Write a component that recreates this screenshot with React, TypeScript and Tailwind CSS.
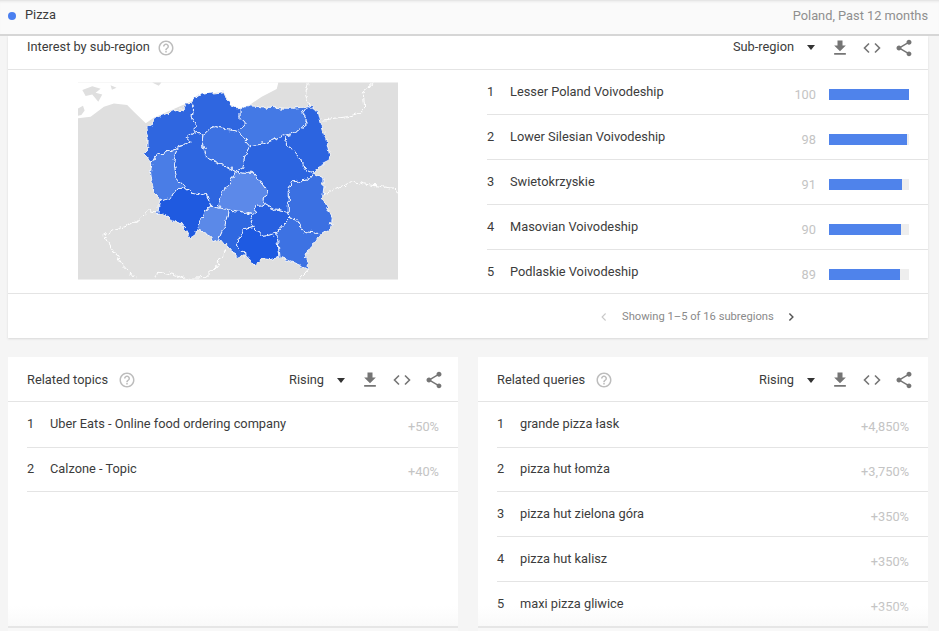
import React from "react";

const regions: [string, string][] = [
  ["#2f66e0", "245,262 218,238 232,222 233,195 226,160 245,150 250,130 290,115 340,100 345,85 360,80 370,100 366,125 375,150 375,170 348,185 362,200 345,210 320,217 290,232 258,240"],
  ["#2f66e0", "360,80 385,62 420,55 460,50 468,70 485,95 510,100 510,130 525,145 505,170 470,163 435,155 415,162 398,178 375,170 375,150 366,125 370,100"],
  ["#4479e5", "510,100 530,92 600,97 660,100 715,95 700,115 712,145 680,170 640,183 580,207 540,212 520,190 505,170 525,145 510,130"],
  ["#2c64e0", "715,95 745,108 755,150 770,200 778,235 775,258 748,272 730,295 705,285 695,255 680,240 655,215 640,183 680,170 712,145 700,115"],
  ["#3d72e3", "398,178 415,162 435,155 470,163 505,170 520,190 540,212 525,240 518,280 495,290 470,275 440,262 410,250 395,205"],
  ["#2e66e0", "375,170 398,178 395,205 410,250 440,262 470,275 495,290 480,320 462,345 445,385 440,398 425,395 410,355 390,360 365,355 345,340 325,320 318,305 310,260 320,217 345,210 362,200 348,185"],
  ["#4a7de6", "245,262 258,240 290,232 320,217 310,260 318,305 325,320 345,340 320,342 300,370 268,375 250,350 245,325 240,290"],
  ["#1f5ae0", "268,375 300,370 320,342 345,340 365,355 390,360 410,355 425,395 415,398 400,420 380,465 375,480 360,490 345,465 330,445 300,435 275,415 262,420"],
  ["#5b89e8", "415,398 425,395 440,398 475,405 465,450 445,495 430,500 420,485 380,465 400,420"],
  ["#2f68e0", "475,405 510,410 550,420 540,435 550,458 520,465 500,510 520,530 522,542 500,552 488,530 470,510 445,495 465,450"],
  ["#1e5ae2", "550,458 575,485 590,483 620,475 625,510 630,548 600,555 575,552 550,570 535,550 522,542 520,530 500,510 520,465"],
  ["#3d72e3", "620,475 640,450 660,430 680,432 700,470 755,478 730,510 705,545 712,565 717,585 690,572 660,560 630,548 625,510"],
  ["#2860e0", "580,385 610,402 655,410 660,430 640,450 620,475 590,483 575,485 550,458 540,435 550,420 560,395"],
  ["#5c89e9", "495,290 520,295 550,295 570,320 590,345 580,385 560,395 550,420 510,410 475,405 440,398 445,385 462,345 480,320"],
  ["#2c64e0", "540,212 580,207 640,183 655,215 680,240 695,255 705,285 730,295 715,315 665,322 655,350 655,410 610,402 580,385 590,345 570,320 550,295 520,295 495,290 518,280 525,240"],
  ["#3b70e2", "730,295 762,310 762,340 757,375 775,405 787,430 783,460 755,478 700,470 680,432 660,430 655,410 655,350 665,322 715,315"],
];

function PolandMap() {
  return (
    <svg viewBox="22 22 963 593" className="block w-[320px] h-[198px]">
      <defs>
        <filter id="wobble" x="-5%" y="-5%" width="110%" height="110%" colorInterpolationFilters="sRGB">
          <feTurbulence type="fractalNoise" baseFrequency="0.06" numOctaves="2" seed="4" />
          <feDisplacementMap in="SourceGraphic" scale="20" xChannelSelector="R" yChannelSelector="G" />
        </filter>
        <clipPath id="mapclip">
          <rect x="22" y="22" width="963" height="593" />
        </clipPath>
      </defs>
      <rect x="22" y="22" width="963" height="593" fill="#dfdfdf" />
      <polygon
        fill="#fff"
        points="22,22 625,22 620,42 575,65 530,95 510,100 480,90 460,50 400,58 360,80 250,128 226,145 190,110 170,90 130,85 100,95 60,125 22,130"
      />
      <path
        fill="#dfdfdf"
        d="M35 45l30-12 25 8-15 12 20 5-12 22-18-22-20 5zM120 30l18 8-14 6zM22 100l15-8 5 14-10 14-10 2zM245 22h28l-8 10z"
      />
      <g clipPath="url(#mapclip)">
        <g fill="none" stroke="#fff" strokeWidth="3" filter="url(#wobble)">
          <path d="M715 22l-8 38 11 35" />
          <path d="M915 22l-35 28 5 50-15 15-40 10-70 10" />
          <path d="M757 360l33-15 60-25 50 10 65 10 20 15" />
          <path d="M262 415l-27-7-35 32-70 25-30 15 25 45 35 50 35 40" />
          <path d="M255 615l10-25 45 10 40 15 50-3 40-37 30-55" />
          <path d="M717 585l-27 30" />
        </g>
      </g>
      <g stroke="#fff" strokeWidth="2.5" strokeLinejoin="round" filter="url(#wobble)">
        {regions.map(([fill, pts], i) => (
          <polygon key={i} points={pts} fill={fill} />
        ))}
      </g>
    </svg>
  );
}

function Mi({ d, className }: { d: string; className: string }) {
  return (
    <svg viewBox="0 0 24 24" className={className} fill="currentColor">
      <path d={d} />
    </svg>
  );
}

const HELP =
  "M11 18h2v-2h-2v2zm1-16C6.48 2 2 6.48 2 12s4.48 10 10 10 10-4.48 10-10S17.52 2 12 2zm0 18c-4.41 0-8-3.59-8-8s3.59-8 8-8 8 3.59 8 8-3.59 8-8 8zm0-14c-2.21 0-4 1.79-4 4h2c0-1.1.9-2 2-2s2 .9 2 2c0 2-3 1.75-3 5h2c0-2.25 3-2.5 3-5 0-2.21-1.79-4-4-4z";
const DOWNLOAD = "M19 9h-4V3H9v6H5l7 7 7-7zM5 18v2h14v-2H5z";
const SHARE =
  "M18 16.08c-.76 0-1.44.3-1.96.77L8.91 12.7c.05-.23.09-.46.09-.7s-.04-.47-.09-.7l7.05-4.11c.54.5 1.25.81 2.04.81 1.66 0 3-1.34 3-3s-1.34-3-3-3-3 1.34-3 3c0 .24.04.47.09.7L8.04 9.81C7.5 9.31 6.79 9 6 9c-1.66 0-3 1.34-3 3s1.34 3 3 3c.79 0 1.5-.31 2.04-.81l7.12 4.16c-.05.21-.08.43-.08.65 0 1.61 1.31 2.92 2.92 2.92 1.61 0 2.92-1.31 2.92-2.92s-1.31-2.92-2.92-2.92z";

function CardHeader({
  title,
  filter,
  className,
  helpClass,
}: {
  title: string;
  filter: string;
  className: string;
  helpClass: string;
}) {
  return (
    <div className={`flex items-center border-b border-[#e4e4e4] pl-[19px] pr-[14px] ${className}`}>
      <span className="text-[#3c3c3c]">{title}</span>
      <Mi d={HELP} className={`w-[18px] h-[18px] text-[#bdbdbd] ${helpClass}`} />
      <div className="flex-1" />
      <span className="text-[#3c3c3c]">{filter}</span>
      <span className="ml-[13px] mr-[5px] w-0 h-0 border-x-[4px] border-x-transparent border-t-[5px] border-t-[#333]" />
      <Mi d={DOWNLOAD} className="ml-[10px] w-[20px] h-[20px] text-[#757575]" />
      <svg
        viewBox="0 0 20 20"
        className="ml-[12px] w-[20px] h-[20px] text-[#757575]"
        fill="none"
        stroke="currentColor"
        strokeWidth="1.6"
      >
        <path d="M7 5.5L2.5 10 7 14.5M13 5.5l4.5 4.5-4.5 4.5" />
      </svg>
      <Mi d={SHARE} className="ml-[12px] w-[20px] h-[20px] text-[#757575]" />
    </div>
  );
}

function ListRow({ n, label, value, h }: { n: number; label: string; value: string; h: string }) {
  return (
    <div className={`ml-[19px] flex items-center border-b border-[#e4e4e4] pr-[19px] ${h}`}>
      <span className="w-[23px] text-[#3c3c3c] -mt-[1px]">{n}</span>
      <span className="text-[#3c3c3c] -mt-[1px]">{label}</span>
      <span className="ml-auto mt-[5px] text-[#c4c4c4]">{value}</span>
    </div>
  );
}

const subregions: [number, string, number, string][] = [
  [1, "Lesser Poland Voivodeship", 100, "w-[80px]"],
  [2, "Lower Silesian Voivodeship", 98, "w-[78px]"],
  [3, "Swietokrzyskie", 91, "w-[73px]"],
  [4, "Masovian Voivodeship", 90, "w-[72px]"],
  [5, "Podlaskie Voivodeship", 89, "w-[71px]"],
];

export default function App() {
  return (
    <div className="w-[939px] h-[631px] overflow-hidden bg-[#f5f5f5] font-['Roboto',sans-serif] text-[12.8px] leading-none">
      <div className="h-[36px] bg-[#fafafa] border-b-2 border-[#d6d6d6] flex items-center pb-[3px] pl-[8px] pr-[11px] shadow-[inset_0_3px_3px_-2px_#dcdcdc]">
        <span className="w-[8px] h-[8px] rounded-full bg-[#4a7ff0]" />
        <span className="ml-[9px] text-[#3c3c3c]">Pizza</span>
        <span className="ml-auto mt-[1px] text-[#8f8f8f]">Poland, Past 12 months</span>
      </div>

      <div className="mx-[8px] w-[920px] h-[302px] bg-white shadow-[0_1px_2px_#d8d8d8]">
        <CardHeader title="Interest by sub-region" filter="Sub-region" className="h-[34px] pb-[10px]" helpClass="ml-[7px]" />
        <div className="flex h-[224px] border-b border-[#e4e4e4]">
          <div className="w-[470px] pt-[12px] pl-[70px]">
            <PolandMap />
          </div>
          <div className="flex-1">
            {subregions.map(([n, label, v, w]) => (
              <div key={n} className="h-[45px] last:h-[44px] ml-[9px] pt-[2px] flex items-center border-b last:border-b-0 border-[#e4e4e4] pr-[19px]">
                <span className="w-[23px] text-[#3c3c3c] -mt-[1px]">{n}</span>
                <span className="text-[#3c3c3c] -mt-[1px]">{label}</span>
                <span className="ml-auto mt-[5px] text-[#c4c4c4]">{v}</span>
                <div className="ml-[13px] mt-[2px] w-[80px] h-[11px] bg-[#eeeeee]">
                  <div className={`h-full bg-[#4f83eb] ${w}`} />
                </div>
              </div>
            ))}
          </div>
        </div>
        <div className="h-[44px] flex items-center pl-[592px] pt-[2px] text-[11.2px] text-[#8a8a8a]">
          <span className="w-[22px] text-[#c8c8c8]">
            <svg viewBox="0 0 10 12" className="w-[7px] h-[10px]" fill="none" stroke="currentColor" strokeWidth="1.6">
              <path d="M8 1L3 6l5 5" />
            </svg>
          </span>
          <span>Showing 1–5 of 16 subregions</span>
          <svg viewBox="0 0 10 12" className="ml-[14px] w-[7px] h-[10px] text-[#555]" fill="none" stroke="currentColor" strokeWidth="2">
            <path d="M2 1l5 5-5 5" />
          </svg>
        </div>
      </div>

      <div className="mt-[19px] mx-[8px] w-[920px] flex gap-[20px] items-start">
        <div className="relative w-[450px] h-[274px] bg-white overflow-hidden">
          <CardHeader title="Related topics" filter="Rising" className="h-[45px] pt-[2px]" helpClass="ml-[10px]" />
          <ListRow n={1} label="Uber Eats - Online food ordering company" value="+50%" h="h-[46px]" />
          <ListRow n={2} label="Calzone - Topic" value="+40%" h="h-[44px]" />
          <div className="absolute left-0 right-0 bottom-0 h-[25px] bg-gradient-to-b from-transparent to-[#f8f8f8]">
            <div className="absolute left-0 right-0 bottom-0 h-[5px] bg-[#f8f8f8] border-t-2 border-[#e6e6e6]" />
          </div>
        </div>
        <div className="relative w-[450px] h-[274px] bg-white overflow-hidden">
          <CardHeader title="Related queries" filter="Rising" className="h-[45px] pt-[2px]" helpClass="ml-[10px]" />
          <ListRow n={1} label="grande pizza łask" value="+4,850%" h="h-[46px]" />
          <ListRow n={2} label="pizza hut łomża" value="+3,750%" h="h-[44px]" />
          <ListRow n={3} label="pizza hut zielona góra" value="+350%" h="h-[45px] pt-[2px]" />
          <ListRow n={4} label="pizza hut kalisz" value="+350%" h="h-[45px] pt-[2px]" />
          <ListRow n={5} label="maxi pizza gliwice" value="+350%" h="h-[45px] pt-[2px]" />
          <div className="absolute left-0 right-0 bottom-0 h-[25px] bg-gradient-to-b from-transparent to-[#f8f8f8]">
            <div className="absolute left-0 right-0 bottom-0 h-[5px] bg-[#f8f8f8] border-t-2 border-[#e6e6e6]" />
          </div>
        </div>
      </div>
    </div>
  );
}
